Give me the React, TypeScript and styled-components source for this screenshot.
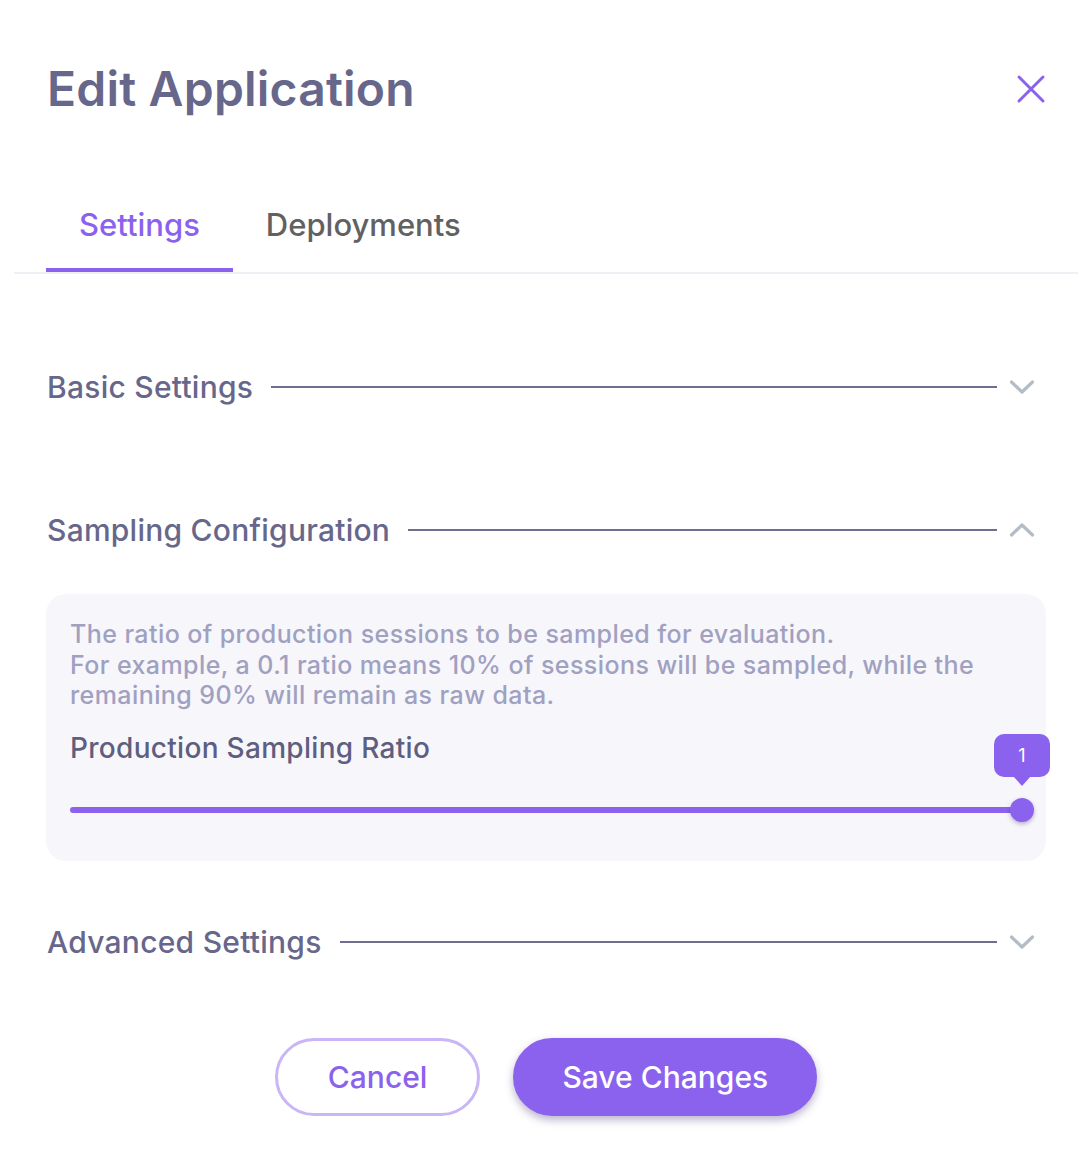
import { useState } from "react";
import styled, { createGlobalStyle } from "styled-components";

const GlobalStyle = createGlobalStyle`
  html, body {
    margin: 0;
    padding: 0;
    background: #ffffff;
  }
  body {
    font-family: Inter, "Noto Sans", "Liberation Sans", sans-serif;
    -webkit-font-smoothing: antialiased;
  }
  * {
    box-sizing: border-box;
  }
`;

const PURPLE = "#8b62ee";
const SLATE = "#67678b";

const Modal = styled.div`
  width: 1092px;
  min-height: 1164px;
  background: #fff;
`;

const Header = styled.div`
  display: flex;
  align-items: center;
  justify-content: space-between;
  padding: 60px 46px 0 47px;
`;

const Title = styled.h1`
  margin: 0;
  font-size: 48px;
  line-height: 58px;
  font-weight: 600;
  color: ${SLATE};
  letter-spacing: 0.2px;
`;

const CloseButton = styled.button`
  display: flex;
  align-items: center;
  justify-content: center;
  width: 30px;
  height: 30px;
  padding: 0;
  border: none;
  background: none;
  cursor: pointer;
`;

const TabList = styled.div`
  display: flex;
  margin: 89px 14px 0;
  padding-left: 32px;
  border-bottom: 2px solid #efeff5;
`;

const Tab = styled.button<{ $active?: boolean }>`
  padding: 0 33px 25px;
  border: none;
  border-bottom: 4px solid ${(p) => (p.$active ? PURPLE : "transparent")};
  background: none;
  font-family: inherit;
  font-size: 31px;
  line-height: 36px;
  font-weight: 500;
  color: ${(p) => (p.$active ? PURPLE : "#616161")};
  cursor: pointer;
`;

const Body = styled.div`
  padding: 0 46px 0 46px;
`;

const SectionRow = styled.div<{ $top: number }>`
  display: flex;
  align-items: center;
  height: 40px;
  margin-top: ${(p) => p.$top}px;
`;

const SectionTitle = styled.span`
  font-size: 30px;
  letter-spacing: 0.25px;
  font-weight: 500;
  color: ${SLATE};
  white-space: nowrap;
  padding-left: 1px;
`;

const Rule = styled.div`
  flex: 1;
  height: 2px;
  margin-left: 18px;
  background: #6e6e90;
`;

const ChevronBox = styled.div`
  display: flex;
  align-items: center;
  justify-content: center;
  width: 49px;
  height: 40px;
`;

const Panel = styled.div`
  margin-top: 44px;
  padding: 25px 24px 0;
  height: 267px;
  border-radius: 20px;
  background: #f7f6fb;
`;

const Description = styled.p`
  margin: 0;
  font-size: 25px;
  letter-spacing: 0.42px;
  line-height: 30.5px;
  font-weight: 500;
  color: #a0a0c1;
`;

const FieldLabel = styled.div`
  margin-top: 22px;
  font-size: 28px;
  letter-spacing: 0.3px;
  line-height: 30px;
  font-weight: 500;
  color: #5e5e80;
`;

const SliderArea = styled.div`
  position: relative;
  margin-top: 41px;
  height: 12px;
  display: flex;
  align-items: center;
`;

const Track = styled.div`
  width: 100%;
  height: 6px;
  border-radius: 3px;
  background: ${PURPLE};
`;

const Thumb = styled.div`
  position: absolute;
  top: 50%;
  width: 24px;
  height: 24px;
  margin: -12px 0 0 -12px;
  border-radius: 50%;
  background: ${PURPLE};
  box-shadow: 0 2px 4px rgba(60, 40, 120, 0.35);
`;

const Bubble = styled.div`
  position: absolute;
  bottom: 39px;
  width: 56px;
  height: 43px;
  margin-left: -28px;
  border-radius: 10px;
  background: ${PURPLE};
  color: #fff;
  font-size: 18px;
  display: flex;
  align-items: center;
  justify-content: center;

  &::after {
    content: "";
    position: absolute;
    bottom: -9px;
    left: 50%;
    margin-left: -9px;
    border-left: 9px solid transparent;
    border-right: 9px solid transparent;
    border-top: 10px solid ${PURPLE};
  }
`;

const Actions = styled.div`
  display: flex;
  justify-content: center;
  gap: 33px;
  margin-top: 76px;
`;

const Button = styled.button<{ $primary?: boolean }>`
  height: 78px;
  padding: 0 ${(p) => (p.$primary ? 46 : 50)}px;
  border-radius: 40px;
  font-family: inherit;
  font-size: 30px;
  font-weight: 500;
  cursor: pointer;
  border: 3px solid ${(p) => (p.$primary ? PURPLE : "#c9b6f6")};
  background: ${(p) => (p.$primary ? PURPLE : "#fff")};
  color: ${(p) => (p.$primary ? "#fff" : PURPLE)};
  box-shadow: ${(p) => (p.$primary ? "0 4px 8px rgba(60, 40, 110, 0.35)" : "none")};
`;

function Chevron({ up }: { up?: boolean }) {
  return (
    <svg width="26" height="16" viewBox="0 0 26 16" fill="none">
      <path
        d={up ? "M2.5 13 L13 3 L23.5 13" : "M2.5 3 L13 13 L23.5 3"}
        stroke="#b4bcc6"
        strokeWidth="3.2"
        strokeLinecap="round"
        strokeLinejoin="round"
      />
    </svg>
  );
}

function Section({ title, open, top }: { title: string; open?: boolean; top: number }) {
  return (
    <SectionRow $top={top}>
      <SectionTitle>{title}</SectionTitle>
      <Rule />
      <ChevronBox>
        <Chevron up={open} />
      </ChevronBox>
    </SectionRow>
  );
}

export default function App() {
  const [tab, setTab] = useState("settings");
  const ratio = 1;

  return (
    <>
      <GlobalStyle />
      <Modal>
        <Header>
          <Title>Edit Application</Title>
          <CloseButton aria-label="Close">
            <svg width="30" height="30" viewBox="0 0 30 30" fill="none">
              <path d="M3 3 L27 27 M27 3 L3 27" stroke={PURPLE} strokeWidth="3" strokeLinecap="round" />
            </svg>
          </CloseButton>
        </Header>

        <TabList>
          <Tab $active={tab === "settings"} onClick={() => setTab("settings")}>
            Settings
          </Tab>
          <Tab $active={tab === "deployments"} onClick={() => setTab("deployments")}>
            Deployments
          </Tab>
        </TabList>

        <Body>
          <Section title="Basic Settings" top={93} />
          <Section title="Sampling Configuration" open top={103} />
          <Panel>
            <Description>
              The ratio of production sessions to be sampled for evaluation.
              <br />
              For example, a 0.1 ratio means 10% of sessions will be sampled, while the remaining 90% will remain as raw data.
            </Description>
            <FieldLabel>Production Sampling Ratio</FieldLabel>
            <SliderArea>
              <Track />
              <Thumb style={{ left: `${ratio * 100}%` }} />
              <Bubble style={{ left: `${ratio * 100}%` }}>{ratio}</Bubble>
            </SliderArea>
          </Panel>
          <Section title="Advanced Settings" top={61} />
        </Body>

        <Actions>
          <Button>Cancel</Button>
          <Button $primary>Save Changes</Button>
        </Actions>
      </Modal>
    </>
  );
}
